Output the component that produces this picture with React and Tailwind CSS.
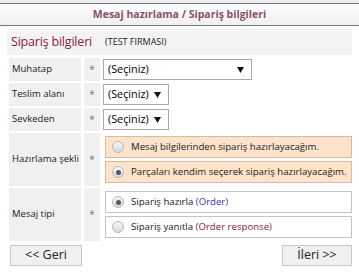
import { useState } from 'react'

function Radio({ checked }) {
  return (
    <span className="flex h-[12px] w-[12px] shrink-0 items-center justify-center rounded-full border border-[#b8b8b8] bg-gradient-to-b from-[#f7f7f7] to-[#d8d8d8]">
      {checked && <span className="h-[5px] w-[5px] rounded-full bg-[#555]" />}
    </span>
  )
}

function Select({ width }) {
  return (
    <div
      className={`flex h-[21px] items-center justify-between border border-[#a9a9a9] bg-white pl-[4px] pr-[7px] text-[10.8px] text-black ${width}`}
    >
      <span>(Seçiniz)</span>
      <svg width="7" height="6" viewBox="0 0 7 6">
        <polygon points="0,0 7,0 3.5,6" fill="#111" />
      </svg>
    </div>
  )
}

function Row({ label, height, children }) {
  return (
    <div className={`flex gap-[3px] ${height}`}>
      <div className="flex w-[72px] items-center bg-[#f0f0f0] pl-[3px] text-[9.5px] text-[#1a1a1a]">{label}</div>
      <div className="flex w-[16px] items-center justify-center bg-[#f0f0f0] text-[10px] text-[#777]">*</div>
      <div className="flex flex-1 flex-col justify-center">{children}</div>
    </div>
  )
}

export default function App() {
  const [hazirlama, setHazirlama] = useState(1)
  const [tip, setTip] = useState(0)

  return (
    <div className="h-[274px] w-[359px] bg-white font-['Open_Sans',sans-serif]">
      <div className="h-[3px] bg-[#ececec]" />
      <div className="flex h-[23px] items-center justify-center border-y border-[#6b7b8e] bg-gradient-to-b from-[#fdfdff] to-[#f3efef] text-[10.5px] font-bold text-[#87526a]">
        Mesaj hazırlama / Sipariş bilgileri
      </div>

      <div className="ml-[7px] mt-[3px] flex h-[26px] w-[345px] items-center bg-[#f3f3f3] pl-[4px]">
        <span className="text-[12.5px] tracking-[-0.2px] text-[#8c1b40]">Sipariş bilgileri</span>
        <span className="ml-[13px] text-[9px] text-[#222]">(TEST FIRMASI)</span>
      </div>

      <div className="ml-[9px] mt-[3px] flex w-[343px] flex-col gap-[2px]">
        <Row label="Muhatap" height="h-[23px]">
          <Select width="w-[149px]" />
        </Row>
        <Row label="Teslim alanı" height="h-[23px]">
          <Select width="w-[66px]" />
        </Row>
        <Row label="Sevkeden" height="h-[23px]">
          <Select width="w-[66px]" />
        </Row>
        <Row label="Hazırlama şekli" height="h-[53px]">
          <div className="flex flex-col gap-[3px] pl-[2px]">
            {['Mesaj bilgilerinden sipariş hazırlayacağım.', 'Parçaları kendim seçerek sipariş hazırlayacağım.'].map((t, i) => (
              <div
                key={i}
                onClick={() => setHazirlama(i)}
                className="flex h-[22px] items-center gap-[7px] border border-[#d9b9a0] bg-[#fde3c9] pl-[6px] text-[9.65px] text-[#222]"
              >
                <Radio checked={hazirlama === i} />
                <span>{t}</span>
              </div>
            ))}
          </div>
        </Row>
        <Row label="Mesaj tipi" height="h-[53px]">
          <div className="flex flex-col gap-[3px] pl-[2px]">
            <div
              onClick={() => setTip(0)}
              className="flex h-[22px] items-center gap-[7px] border border-[#c4c4c4] bg-white pl-[6px] text-[9.65px] text-[#222]"
            >
              <Radio checked={tip === 0} />
              <span>
                Sipariş hazırla <span className="text-[#3535b5]">(Order)</span>
              </span>
            </div>
            <div
              onClick={() => setTip(1)}
              className="flex h-[22px] items-center gap-[7px] border border-[#c4c4c4] bg-white pl-[6px] text-[9.65px] text-[#222]"
            >
              <Radio checked={tip === 1} />
              <span>
                Sipariş yanıtla <span className="text-[#8c1b40]">(Order response)</span>
              </span>
            </div>
          </div>
        </Row>
      </div>

      <div className="ml-[10px] mt-[4px] flex w-[342px] justify-between">
        <button className="h-[21px] w-[72px] border border-[#c8c8c8] bg-[#f0f0f0] text-[12.5px] text-[#222]">
          &lt;&lt; Geri
        </button>
        <button className="h-[21px] w-[70px] border border-[#c8c8c8] bg-[#f0f0f0] text-[12.5px] text-[#222]">
          İleri &gt;&gt;
        </button>
      </div>
    </div>
  )
}
